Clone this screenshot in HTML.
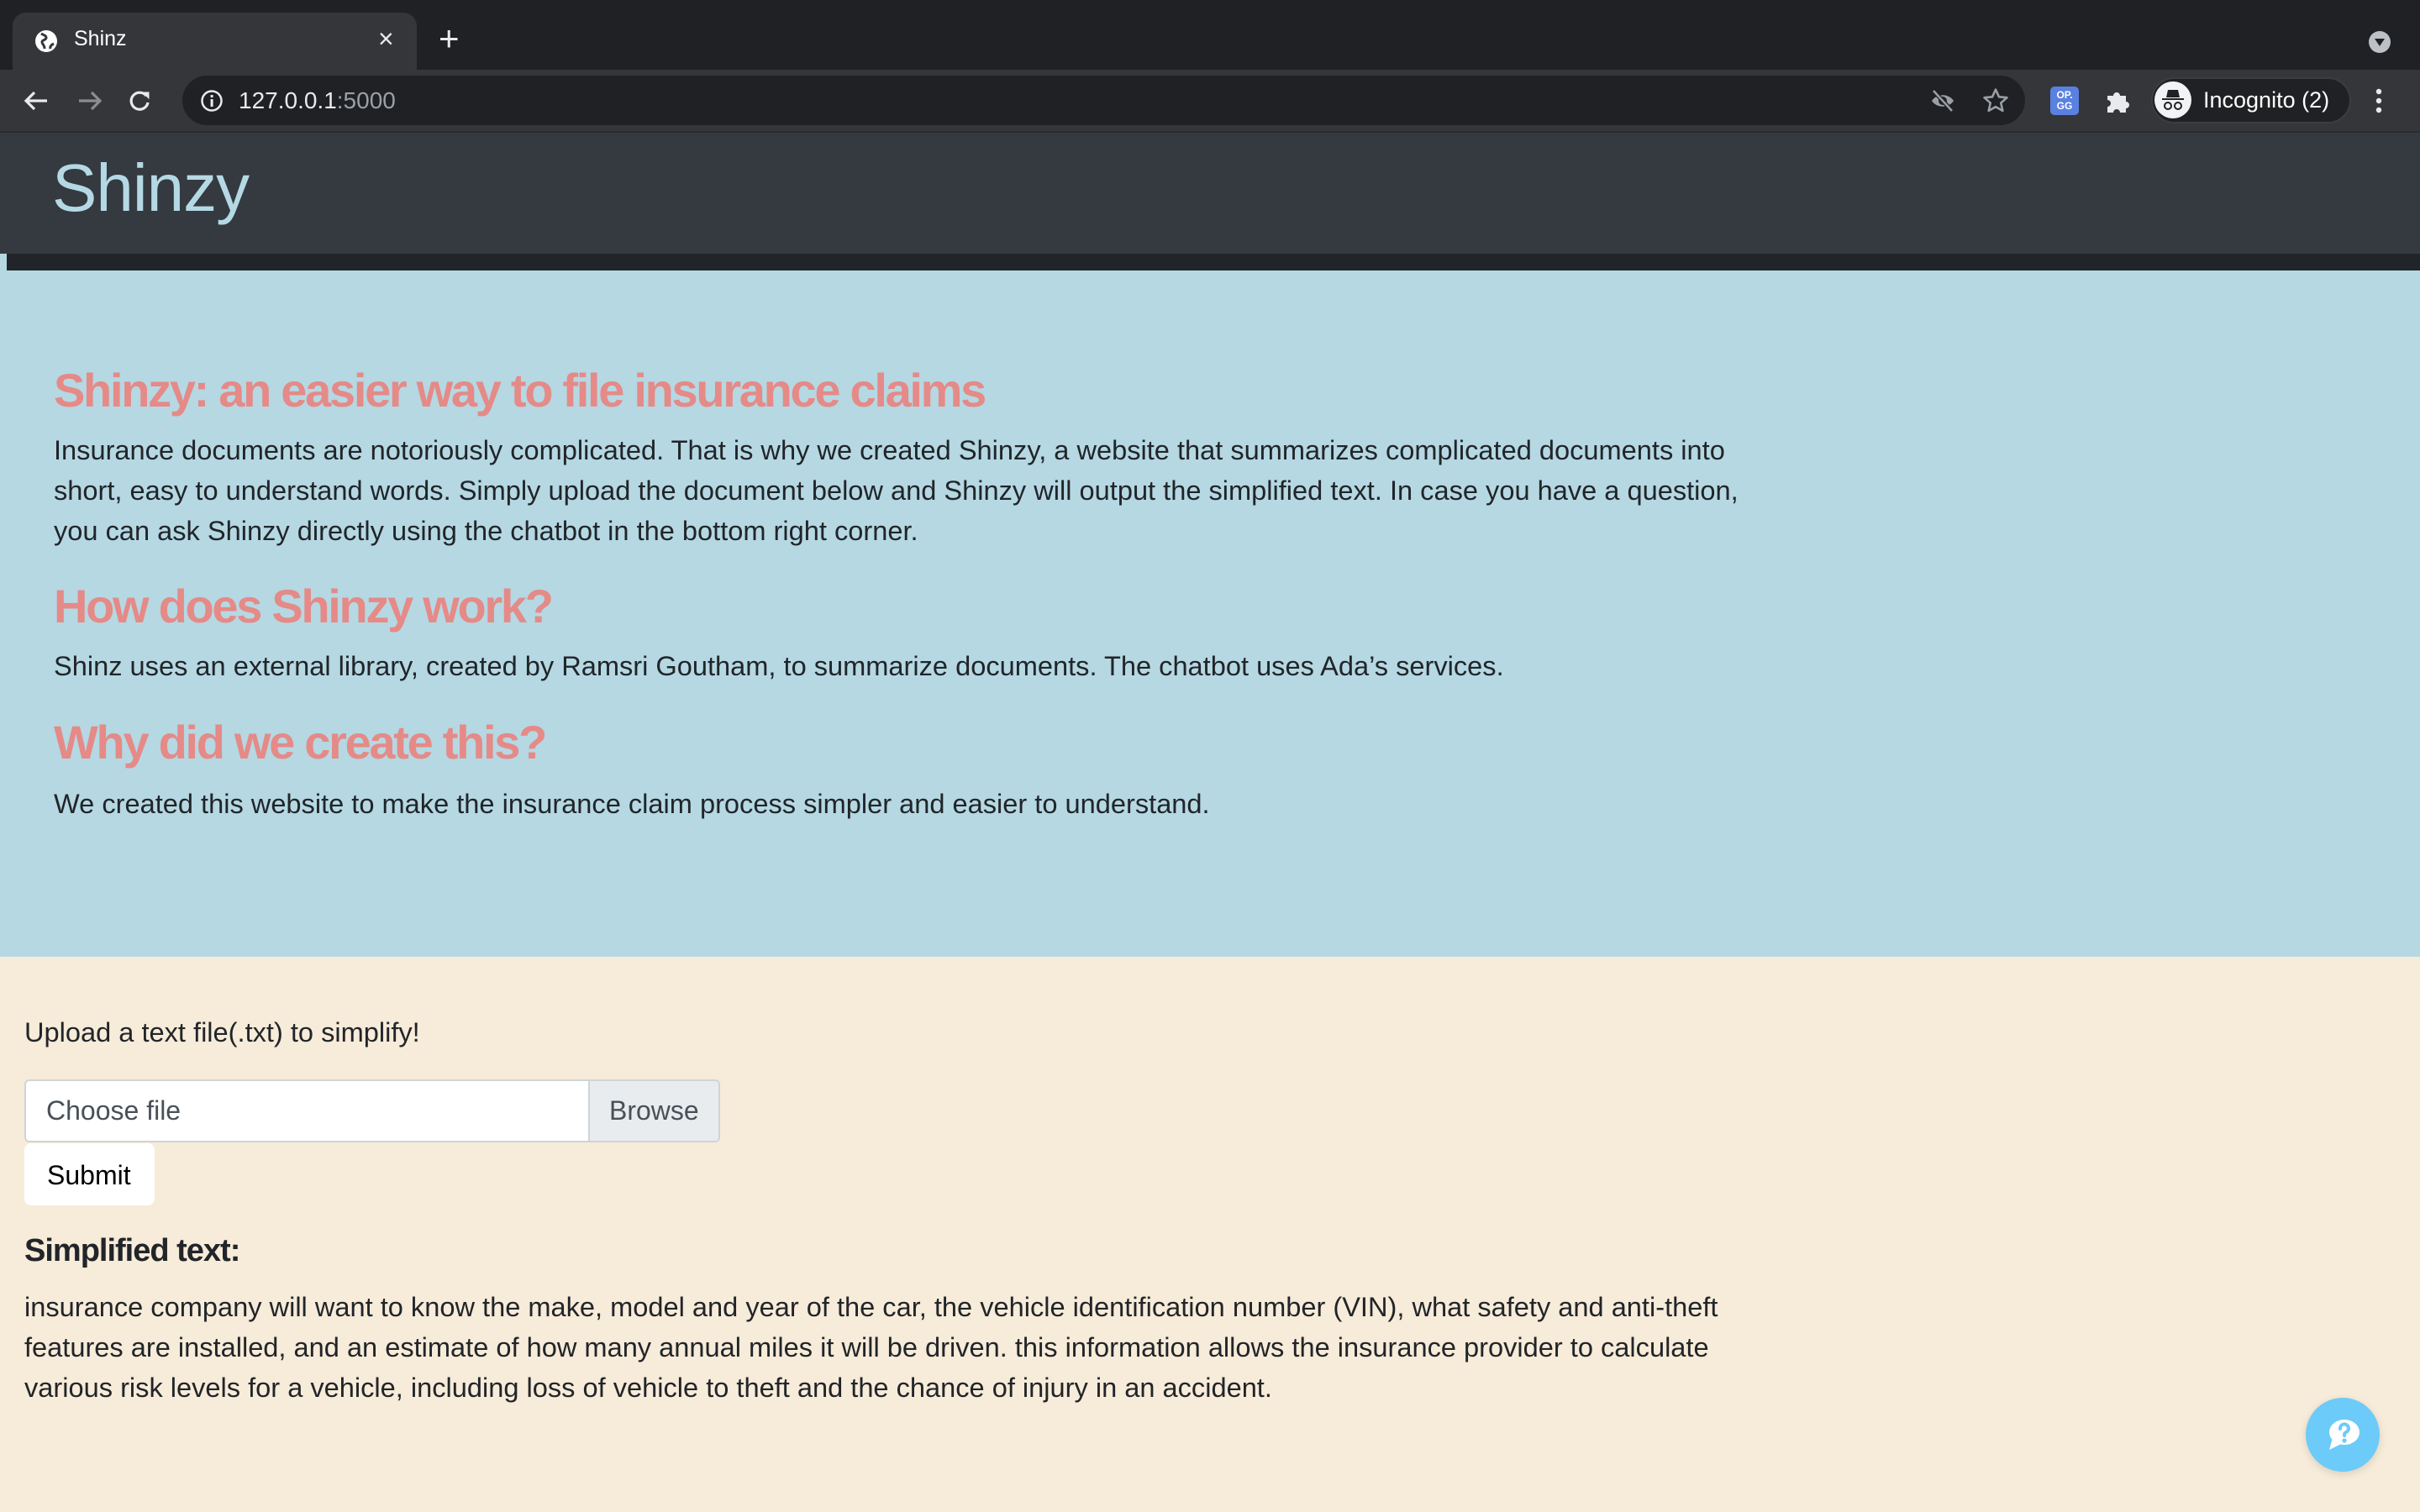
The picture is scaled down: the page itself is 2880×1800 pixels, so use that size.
<!DOCTYPE html>
<html><head><meta charset="utf-8"><style>
*{margin:0;padding:0;box-sizing:border-box}
body{width:2880px;height:1800px;overflow:hidden;background:#f7ebd9;font-family:"Liberation Sans",sans-serif;position:relative}
.a{position:absolute;white-space:nowrap}
.t{color:#212529;font-size:32.6px;line-height:48px}
.h{color:#e58a87;font-weight:bold;font-size:56px;line-height:70px;letter-spacing:-2.3px}
</style></head><body>
<div class="a" style="left:0;top:0;width:2880px;height:83px;background:#202124"></div>
<div class="a" style="left:15px;top:15px;width:481px;height:70px;background:#35363a;border-radius:16px 16px 0 0"></div>
<svg class="a" style="left:40px;top:34px" width="30" height="30" viewBox="0 0 30 30"><circle cx="15" cy="15" r="13" fill="#fff"/><path d="M9 6c3 2 6 2 6 5s-5 2-5 5 3 3 3 8M20 24c-1-3 2-5 4-6" stroke="#35363a" stroke-width="3" fill="none"/></svg>
<div class="a" style="left:88px;top:32px;color:#fff;font-size:25px">Shinz</div>
<div class="a" style="left:450px;top:28px;color:#e8eaed;font-size:32px">×</div>
<div class="a" style="left:522px;top:22px;color:#e8eaed;font-size:42px;font-weight:300">+</div>
<svg class="a" style="left:2818px;top:36px" width="28" height="28"><circle cx="14" cy="14" r="13" fill="#bdc1c6"/><path d="M8 10h12l-6 9z" fill="#202124"/></svg>
<div class="a" style="left:0;top:83px;width:2880px;height:73px;background:#35363a"></div>
<div class="a" style="left:0;top:156px;width:2880px;height:2px;background:#2a2b2e"></div>
<svg class="a" style="left:0;top:104px" width="190" height="32" viewBox="0 0 190 32" fill="none" stroke-width="3.2"><path d="M56 16H32M41 6L31 16l10 10" stroke="#e8eaed"/><path d="M94 16H118M109 6l10 10-10 10" stroke="#8b8d91"/><path d="M174 10a10 10 0 1 0 2 8" stroke="#e8eaed"/><path d="M170 6h7v7z" fill="#e8eaed" stroke="#e8eaed" stroke-width="1"/></svg>
<div class="a" style="left:217px;top:90px;width:2193px;height:59px;background:#202124;border-radius:30px"></div>
<svg class="a" style="left:238px;top:106px" width="28" height="28"><circle cx="14" cy="14" r="11.5" fill="none" stroke="#e8eaed" stroke-width="2.5"/><rect x="12.6" y="12" width="3" height="9" fill="#e8eaed"/><rect x="12.6" y="7" width="3" height="3" fill="#e8eaed"/></svg>
<div class="a" style="left:284px;top:104px;font-size:28px;color:#e8eaed">127.0.0.1<span style="color:#9aa0a6">:5000</span></div>
<svg class="a" style="left:2296px;top:104px" width="32" height="32" viewBox="0 0 32 32"><path d="M3 16c6-9 20-9 26 0-6 9-20 9-26 0z" fill="#9aa0a6"/><circle cx="16" cy="16" r="5" fill="#202124"/><path d="M5 4l22 24" stroke="#202124" stroke-width="5"/><path d="M5 4l22 24" stroke="#9aa0a6" stroke-width="2.5"/></svg>
<svg class="a" style="left:2358px;top:103px" width="34" height="34" viewBox="0 0 24 24"><path d="M12 2.5l2.8 6.2 6.7.6-5.1 4.5 1.5 6.6L12 17l-5.9 3.4 1.5-6.6-5.1-4.5 6.7-.6z" fill="none" stroke="#9aa0a6" stroke-width="1.8" stroke-linejoin="round"/></svg>
<div class="a" style="left:2440px;top:103px;width:34px;height:34px;background:#5a80e0;border-radius:5px;color:#fff;font-size:12px;font-weight:bold;line-height:13px;text-align:center;padding-top:4px">OP.<br>GG</div>
<svg class="a" style="left:2505px;top:105px" width="30" height="30" viewBox="0 0 30 30"><path d="M3 9h7a4 4 0 1 1 8 0h7v7a4 4 0 1 1 0 8v5H18a4 4 0 1 0-8 0H3v-7a4 4 0 1 0 0-8z" fill="#e8eaed"/></svg>
<div class="a" style="left:2560px;top:92px;width:238px;height:55px;border-radius:28px;background:#202124;border:2px solid #3c3d41"></div>
<svg class="a" style="left:2563px;top:96px" width="46" height="46" viewBox="0 0 46 46"><circle cx="23" cy="23" r="22" fill="#f1f3f4"/><path d="M15 20l2-9h12l2 9zM10 21h26v2H10z" fill="#202124"/><circle cx="17" cy="30" r="4" fill="none" stroke="#202124" stroke-width="2"/><circle cx="29" cy="30" r="4" fill="none" stroke="#202124" stroke-width="2"/></svg>
<div class="a" style="left:2622px;top:104px;font-size:27px;color:#fff">Incognito (2)</div>
<svg class="a" style="left:2826px;top:104px" width="10" height="32"><circle cx="5" cy="5" r="3.2" fill="#e8eaed"/><circle cx="5" cy="16" r="3.2" fill="#e8eaed"/><circle cx="5" cy="27" r="3.2" fill="#e8eaed"/></svg>
<div class="a" style="left:0;top:158px;width:2880px;height:144px;background:#343a40"></div>
<div class="a" style="left:62px;top:176px;font-size:80px;color:#b5d9e4;line-height:96px;letter-spacing:-1px">Shinzy</div>
<div class="a" style="left:0;top:302px;width:2880px;height:20px;background:#212529"></div>
<div class="a" style="left:0;top:302px;width:8px;height:20px;background:#b5d8e3"></div>
<div class="a" style="left:0;top:322px;width:2880px;height:817px;background:#b5d8e3"></div>
<div class="a h" style="left:64px;top:430px">Shinzy: an easier way to file insurance claims</div>
<div class="a t" style="left:64px;top:512px">Insurance documents are notoriously complicated. That is why we created Shinzy, a website that summarizes complicated documents into<br>short, easy to understand words. Simply upload the document below and Shinzy will output the simplified text. In case you have a question,<br>you can ask Shinzy directly using the chatbot in the bottom right corner.</div>
<div class="a h" style="left:64px;top:687px">How does Shinzy work?</div>
<div class="a t" style="left:64px;top:769px">Shinz uses an external library, created by Ramsri Goutham, to summarize documents. The chatbot uses Ada’s services.</div>
<div class="a h" style="left:64px;top:849px">Why did we create this?</div>
<div class="a t" style="left:64px;top:933px">We created this website to make the insurance claim process simpler and easier to understand.</div>
<div class="a t" style="left:29px;top:1205px">Upload a text file(.txt) to simplify!</div>
<div class="a" style="left:29px;top:1285px;width:828px;height:75px;background:#fff;border:2px solid #ced4da;border-radius:6px;overflow:hidden">
<div class="a" style="left:669px;top:0;width:157px;height:73px;background:#e9ecef;border-left:2px solid #ced4da"></div>
<div class="a" style="left:24px;top:17px;font-size:32px;color:#495057">Choose file</div>
<div class="a" style="left:694px;top:17px;font-size:32px;color:#495057">Browse</div>
</div>
<div class="a" style="left:29px;top:1361px;width:155px;height:74px;background:#fff;border-radius:8px"></div>
<div class="a" style="left:56px;top:1381px;font-size:32px;color:#000">Submit</div>
<div class="a" style="left:29px;top:1468px;font-size:38px;color:#212529;font-weight:bold;letter-spacing:-1px">Simplified text:</div>
<div class="a t" style="left:29px;top:1532px">insurance company will want to know the make, model and year of the car, the vehicle identification number (VIN), what safety and anti-theft<br>features are installed, and an estimate of how many annual miles it will be driven. this information allows the insurance provider to calculate<br>various risk levels for a vehicle, including loss of vehicle to theft and the chance of injury in an accident.</div>
<div class="a" style="left:2744px;top:1664px;width:88px;height:88px;border-radius:50%;background:#6ccbf8;box-shadow:0 3px 10px rgba(0,0,0,.12)"></div>
<svg class="a" style="left:2760px;top:1680px" width="56" height="56" viewBox="0 0 56 56"><ellipse cx="30" cy="25" rx="18" ry="15" fill="#fff"/><path d="M16 32L12 46 28 38z" fill="#fff"/><path d="M25 21a5 5 0 1 1 7 4c-2 1-2 2-2 4" stroke="#6ccbf8" stroke-width="4" fill="none" stroke-linecap="round"/><circle cx="30" cy="35" r="2.6" fill="#6ccbf8"/></svg>
</body></html>
